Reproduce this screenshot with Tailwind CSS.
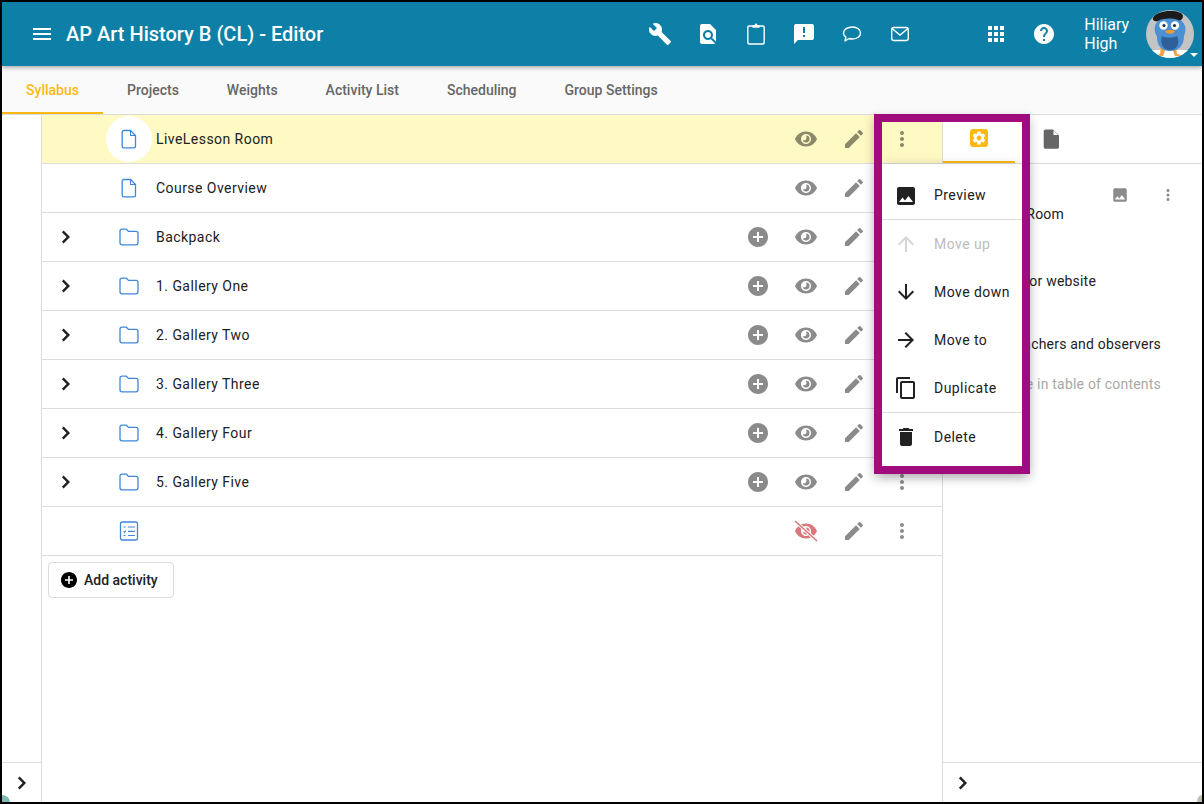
<!doctype html>
<html>
<head>
<meta charset="utf-8">
<script src="https://cdn.jsdelivr.net/npm/@tailwindcss/browser@4"></script>
</head>
<body class="m-0 w-[1204px] h-[804px] overflow-hidden bg-black font-['Roboto',sans-serif]">
<svg class="hidden" width="0" height="0">
  <defs>
    <symbol id="i-eye" viewBox="0 0 24 24"><path fill-rule="evenodd" d="M12 4.500C7 4.500 2.730 7.610 1 12c1.730 4.390 6 7.500 11 7.500s9.270-3.110 11-7.500c-1.730-4.390-6-7.500-11-7.500zM12 17c-2.760 0-5-2.240-5-5s2.240-5 5-5 5 2.240 5 5-2.240 5-5 5z"/><path d="M12 8.500a3.500 3.500 0 1 1-3.400 4.300c.9.700 2.400.700 3.200-.1.800-.8 1-2.600.2-4.200z"/></symbol>
    <symbol id="i-edit" viewBox="0 0 24 24"><path d="M3 17.250V21h3.750L17.810 9.940l-3.750-3.750L3 17.250zM20.710 7.040c.39-.39.39-1.020 0-1.410l-2.340-2.340c-.39-.39-1.020-.39-1.410 0l-1.830 1.830 3.750 3.750 1.830-1.830z"/></symbol>
    <symbol id="i-dots" viewBox="0 0 24 24"><path d="M12 8c1.100 0 2-.9 2-2s-.9-2-2-2-2 .9-2 2 .9 2 2 2zm0 2c-1.100 0-2 .9-2 2s.9 2 2 2 2-.9 2-2-.9-2-2-2zm0 6c-1.100 0-2 .9-2 2s.9 2 2 2 2-.9 2-2-.9-2-2-2z"/></symbol>
    <symbol id="i-add" viewBox="0 0 24 24"><path d="M12 2C6.480 2 2 6.480 2 12s4.480 10 10 10 10-4.480 10-10S17.520 2 12 2zm5 11h-4v4h-2v-4H7v-2h4V7h2v4h4v2z"/></symbol>
    <symbol id="i-chev" viewBox="0 0 24 24"><path d="M9.600 5.600 7.900 7.300 12.600 12l-4.700 4.700 1.700 1.700 6.400-6.400z"/></symbol>
    <symbol id="i-folder" viewBox="0 0 24 24"><path fill="none" stroke="#3f87d9" stroke-width="1.300" stroke-linejoin="round" d="M3 6.200C3 5 3.800 4.200 5 4.200h4.400l2 2.200H19c1.200 0 2 .8 2 2v9.400c0 1.200-.8 2-2 2H5c-1.200 0-2-.8-2-2z"/></symbol>
    <symbol id="i-doc" viewBox="0 0 24 24"><path fill="none" stroke="#3f87d9" stroke-width="1.300" stroke-linejoin="round" d="M6.800 3.500h6.700l5 5v10.700c0 .9-.7 1.600-1.600 1.600H6.800c-.9 0-1.600-.7-1.600-1.600V5.100c0-.9.7-1.600 1.600-1.600z"/><path fill="none" stroke="#3f87d9" stroke-width="1.100" stroke-linejoin="round" d="M13.500 3.500v5h5"/></symbol>
  </defs>
</svg>

<div class="relative m-[2px] w-[1200px] h-[800px] bg-white overflow-hidden flex flex-col">
  <!-- app bar -->
  <header class="relative z-10 h-[64px] shrink-0 bg-[#0e7fa6] text-white flex items-center shadow-[0_2px_4px_rgba(0,0,0,0.3)]">
    <svg class="ml-[28px] w-[24px] h-[24px] fill-white" viewBox="0 0 24 24"><path d="M3 18h18v-2H3v2zm0-5h18v-2H3v2zm0-7v2h18V6H3z"/></svg>
    <h1 class="ml-[12px] text-[20px] leading-none font-medium">AP Art History B (CL) - Editor</h1>
    <div class="ml-[325px] flex items-center gap-[24px]">
      <svg class="w-[24px] h-[24px] fill-white" viewBox="0 0 24 24"><path d="M22.700 19l-9.100-9.100c.9-2.300.4-5-1.500-6.900-2-2-5-2.400-7.400-1.300L9 6 6 9 1.600 4.700C.4 7.100.9 10.100 2.900 12.100c1.900 1.900 4.600 2.400 6.900 1.500l9.100 9.100c.4.4 1 .4 1.400 0l2.300-2.300c.5-.4.5-1.100.1-1.400z"/></svg>
      <svg class="w-[24px] h-[24px] fill-white" viewBox="0 0 24 24"><path d="M20 19.590V8l-6-6H6c-1.100 0-1.990.9-1.990 2L4 20c0 1.100.89 2 1.990 2H18c.45 0 .85-.15 1.190-.4l-4.430-4.430c-.8.520-1.740.83-2.760.83-2.760 0-5-2.240-5-5s2.240-5 5-5 5 2.240 5 5c0 1.020-.31 1.960-.83 2.750L20 19.590zM9 13c0 1.660 1.340 3 3 3s3-1.340 3-3-1.340-3-3-3-3 1.340-3 3z"/></svg>
      <svg class="w-[24px] h-[24px]" viewBox="0 0 24 24"><rect x="3.800" y="4" width="16.400" height="18" rx="1.500" fill="none" stroke="#fff" stroke-width="1.400"/><path fill="#fff" d="M8.500 3h2.200c.1-.9.600-1.500 1.300-1.500s1.200.6 1.300 1.500h2.200v2.800h-7z"/></svg>
      <svg class="w-[24px] h-[24px] fill-white" viewBox="0 0 24 24"><path d="M20 2H4c-1.100 0-1.990.9-1.990 2L2 22l4-4h14c1.100 0 2-.9 2-2V4c0-1.100-.9-2-2-2zm-7 9h-2V5h2v6zm0 4h-2v-2h2v2z"/></svg>
      <svg class="w-[24px] h-[24px]" viewBox="0 0 24 24"><path fill="none" stroke="#fff" stroke-width="1.400" stroke-linejoin="round" d="M12.500 5c4.700 0 8 2.500 8 6s-3.300 6-8 6c-1.200 0-2.400-.2-3.400-.5L5 19l.9-3.900C4.400 14 3.500 12.600 3.500 11c0-3.500 4-6 9-6z"/></svg>
      <svg class="w-[24px] h-[24px]" viewBox="0 0 24 24"><rect x="3.700" y="5.500" width="16.600" height="13" rx="2.200" fill="none" stroke="#fff" stroke-width="1.400"/><path fill="none" stroke="#fff" stroke-width="1.400" d="M4 6.500 12 13l8-6.500"/></svg>
    </div>
    <div class="ml-[72px] flex items-center gap-[24px]">
      <svg class="w-[24px] h-[24px] fill-white" viewBox="0 0 24 24"><path d="M4 8h4V4H4v4zm6 12h4v-4h-4v4zm-6 0h4v-4H4v4zm0-6h4v-4H4v4zm6 0h4v-4h-4v4zm6-10v4h4V4h-4zm-6 4h4V4h-4v4zm6 6h4v-4h-4v4zm0 6h4v-4h-4v4z"/></svg>
      <svg class="w-[24px] h-[24px] fill-white" viewBox="0 0 24 24"><path d="M12 2C6.480 2 2 6.480 2 12s4.480 10 10 10 10-4.480 10-10S17.520 2 12 2zm1 17h-2v-2h2v2zm2.070-7.750l-.9.920C13.450 12.900 13 13.500 13 15h-2v-.5c0-1.100.45-2.100 1.170-2.830l1.240-1.260c.37-.36.59-.86.59-1.410 0-1.100-.9-2-2-2s-2 .9-2 2H8c0-2.210 1.790-4 4-4s4 1.790 4 4c0 .88-.36 1.680-.93 2.250z"/></svg>
    </div>
    <div class="ml-[28px] w-[62px] text-[16px] leading-[19px]">Hiliary<br>High</div>
    <div class="relative w-[48px] h-[48px]">
      <svg class="w-[48px] h-[48px]" viewBox="0 0 48 48">
        <defs><clipPath id="av"><circle cx="24" cy="24" r="24"/></clipPath></defs>
        <g clip-path="url(#av)">
          <rect width="48" height="48" fill="#c4c4c4"/>
          <path d="M4 40h40v8H4z" fill="#fff"/>
          <path d="M15 36l-1 8-6 2h9l1-2 2-8zM30 36l1 8 7 2h-9l-1-2-2-8z" fill="#f0a24a"/>
          <path d="M9 16c2-6 8-9 15-9s13 3 15 9c1 4 0 7-1 10 0 9-5 15-14 15S11 35 11 27c-2-4-3-7-2-11z" fill="#4a90d2"/>
          <path d="M16 26c3 2 11 2 15 0 3 6 1 14-7 14s-10-8-8-14z" fill="#2f5f99"/>
          <path d="M7 8c2-5 10-7 17-7 8 0 13 2 13 5 0 3-2 5-5 4-6-2-14-2-20 1-3 1-6-1-5-3z" fill="#1b1b1b"/>
          <circle cx="17.500" cy="15.500" r="4.200" fill="#fff"/><circle cx="29" cy="15.500" r="4.200" fill="#fff"/>
          <circle cx="18" cy="15.500" r="1.600" fill="#17324f"/><circle cx="28.500" cy="15.500" r="1.600" fill="#17324f"/>
          <path d="M19 21c2-1.500 8-1.500 10 0-1 3.500-9 3.500-10 0z" fill="#f09a2e"/>
        </g>
      </svg>
      <span class="absolute right-[-4px] bottom-[1px] w-0 h-0 border-x-[4px] border-x-transparent border-t-[4px] border-t-white"></span>
    </div>
  </header>

  <!-- tabs -->
  <nav class="h-[49px] shrink-0 bg-[#fafafa] border-b border-[#dcdcdc] flex text-[14px] font-medium text-[#666666]">
    <a class="w-[101px] h-[48px] pt-[2px] flex items-center justify-center text-[#fdb913] border-b-2 border-[#fdb913]">Syllabus</a>
    <a class="h-[48px] px-[24px] flex items-center">Projects</a>
    <a class="h-[48px] px-[24px] flex items-center">Weights</a>
    <a class="h-[48px] px-[24px] flex items-center">Activity List</a>
    <a class="h-[48px] px-[24px] flex items-center">Scheduling</a>
    <a class="h-[48px] px-[24px] flex items-center">Group Settings</a>
  </nav>

  <!-- body -->
  <div class="flex-1 flex min-h-0">
    <!-- left rail -->
    <aside class="w-[40px] shrink-0 border-r border-[#dcdcdc] flex flex-col justify-end">
      <div class="h-[40px] border-t border-[#dcdcdc] flex items-center justify-center">
        <svg class="w-[24px] h-[24px] fill-[#212121]" viewBox="0 0 24 24"><use href="#i-chev"/></svg>
      </div>
    </aside>

    <!-- list -->
    <main class="w-[901px] shrink-0 border-r border-[#dcdcdc] text-[14px] tracking-[0.45px] text-[#212121]">
      <div class="h-[49px] bg-[#fff9c4] border-b border-[#dcdcdc] flex items-center pl-[48px] pr-[16px]">
        <span class="w-[46px] h-[46px] ml-[16px] mr-[4px] rounded-full bg-white flex items-center justify-center"><svg class="w-[24px] h-[24px]"><use href="#i-doc"/></svg></span>
        <span class="flex-1">LiveLesson Room</span>
        <span class="w-[48px] flex justify-center"><svg class="w-[24px] h-[24px] opacity-45"><use href="#i-eye"/></svg></span>
        <span class="w-[48px] flex justify-center"><svg class="w-[24px] h-[24px] opacity-45"><use href="#i-edit"/></svg></span>
        <span class="w-[48px] flex justify-center"><svg class="w-[24px] h-[24px] opacity-45"><use href="#i-dots"/></svg></span>
      </div>
      <div class="h-[49px] border-b border-[#dcdcdc] flex items-center pl-[48px] pr-[16px]">
        <span class="w-[46px] h-[46px] ml-[16px] mr-[4px] flex items-center justify-center"><svg class="w-[24px] h-[24px]"><use href="#i-doc"/></svg></span>
        <span class="flex-1">Course Overview</span>
        <span class="w-[48px] flex justify-center"><svg class="w-[24px] h-[24px] opacity-45"><use href="#i-eye"/></svg></span>
        <span class="w-[48px] flex justify-center"><svg class="w-[24px] h-[24px] opacity-45"><use href="#i-edit"/></svg></span>
        <span class="w-[48px] flex justify-center"><svg class="w-[24px] h-[24px] opacity-45"><use href="#i-dots"/></svg></span>
      </div>
      <div class="h-[49px] border-b border-[#dcdcdc] flex items-center pr-[16px]">
        <span class="w-[48px] flex justify-center"><svg class="w-[24px] h-[24px] fill-[#212121]"><use href="#i-chev"/></svg></span>
        <span class="w-[46px] h-[46px] ml-[16px] mr-[4px] flex items-center justify-center"><svg class="w-[24px] h-[24px]"><use href="#i-folder"/></svg></span>
        <span class="flex-1">Backpack</span>
        <span class="w-[48px] flex justify-center"><svg class="w-[24px] h-[24px] opacity-45"><use href="#i-add"/></svg></span>
        <span class="w-[48px] flex justify-center"><svg class="w-[24px] h-[24px] opacity-45"><use href="#i-eye"/></svg></span>
        <span class="w-[48px] flex justify-center"><svg class="w-[24px] h-[24px] opacity-45"><use href="#i-edit"/></svg></span>
        <span class="w-[48px] flex justify-center"><svg class="w-[24px] h-[24px] opacity-45"><use href="#i-dots"/></svg></span>
      </div>
      <div class="h-[49px] border-b border-[#dcdcdc] flex items-center pr-[16px]">
        <span class="w-[48px] flex justify-center"><svg class="w-[24px] h-[24px] fill-[#212121]"><use href="#i-chev"/></svg></span>
        <span class="w-[46px] h-[46px] ml-[16px] mr-[4px] flex items-center justify-center"><svg class="w-[24px] h-[24px]"><use href="#i-folder"/></svg></span>
        <span class="flex-1">1. Gallery One</span>
        <span class="w-[48px] flex justify-center"><svg class="w-[24px] h-[24px] opacity-45"><use href="#i-add"/></svg></span>
        <span class="w-[48px] flex justify-center"><svg class="w-[24px] h-[24px] opacity-45"><use href="#i-eye"/></svg></span>
        <span class="w-[48px] flex justify-center"><svg class="w-[24px] h-[24px] opacity-45"><use href="#i-edit"/></svg></span>
        <span class="w-[48px] flex justify-center"><svg class="w-[24px] h-[24px] opacity-45"><use href="#i-dots"/></svg></span>
      </div>
      <div class="h-[49px] border-b border-[#dcdcdc] flex items-center pr-[16px]">
        <span class="w-[48px] flex justify-center"><svg class="w-[24px] h-[24px] fill-[#212121]"><use href="#i-chev"/></svg></span>
        <span class="w-[46px] h-[46px] ml-[16px] mr-[4px] flex items-center justify-center"><svg class="w-[24px] h-[24px]"><use href="#i-folder"/></svg></span>
        <span class="flex-1">2. Gallery Two</span>
        <span class="w-[48px] flex justify-center"><svg class="w-[24px] h-[24px] opacity-45"><use href="#i-add"/></svg></span>
        <span class="w-[48px] flex justify-center"><svg class="w-[24px] h-[24px] opacity-45"><use href="#i-eye"/></svg></span>
        <span class="w-[48px] flex justify-center"><svg class="w-[24px] h-[24px] opacity-45"><use href="#i-edit"/></svg></span>
        <span class="w-[48px] flex justify-center"><svg class="w-[24px] h-[24px] opacity-45"><use href="#i-dots"/></svg></span>
      </div>
      <div class="h-[49px] border-b border-[#dcdcdc] flex items-center pr-[16px]">
        <span class="w-[48px] flex justify-center"><svg class="w-[24px] h-[24px] fill-[#212121]"><use href="#i-chev"/></svg></span>
        <span class="w-[46px] h-[46px] ml-[16px] mr-[4px] flex items-center justify-center"><svg class="w-[24px] h-[24px]"><use href="#i-folder"/></svg></span>
        <span class="flex-1">3. Gallery Three</span>
        <span class="w-[48px] flex justify-center"><svg class="w-[24px] h-[24px] opacity-45"><use href="#i-add"/></svg></span>
        <span class="w-[48px] flex justify-center"><svg class="w-[24px] h-[24px] opacity-45"><use href="#i-eye"/></svg></span>
        <span class="w-[48px] flex justify-center"><svg class="w-[24px] h-[24px] opacity-45"><use href="#i-edit"/></svg></span>
        <span class="w-[48px] flex justify-center"><svg class="w-[24px] h-[24px] opacity-45"><use href="#i-dots"/></svg></span>
      </div>
      <div class="h-[49px] border-b border-[#dcdcdc] flex items-center pr-[16px]">
        <span class="w-[48px] flex justify-center"><svg class="w-[24px] h-[24px] fill-[#212121]"><use href="#i-chev"/></svg></span>
        <span class="w-[46px] h-[46px] ml-[16px] mr-[4px] flex items-center justify-center"><svg class="w-[24px] h-[24px]"><use href="#i-folder"/></svg></span>
        <span class="flex-1">4. Gallery Four</span>
        <span class="w-[48px] flex justify-center"><svg class="w-[24px] h-[24px] opacity-45"><use href="#i-add"/></svg></span>
        <span class="w-[48px] flex justify-center"><svg class="w-[24px] h-[24px] opacity-45"><use href="#i-eye"/></svg></span>
        <span class="w-[48px] flex justify-center"><svg class="w-[24px] h-[24px] opacity-45"><use href="#i-edit"/></svg></span>
        <span class="w-[48px] flex justify-center"><svg class="w-[24px] h-[24px] opacity-45"><use href="#i-dots"/></svg></span>
      </div>
      <div class="h-[49px] border-b border-[#dcdcdc] flex items-center pr-[16px]">
        <span class="w-[48px] flex justify-center"><svg class="w-[24px] h-[24px] fill-[#212121]"><use href="#i-chev"/></svg></span>
        <span class="w-[46px] h-[46px] ml-[16px] mr-[4px] flex items-center justify-center"><svg class="w-[24px] h-[24px]"><use href="#i-folder"/></svg></span>
        <span class="flex-1">5. Gallery Five</span>
        <span class="w-[48px] flex justify-center"><svg class="w-[24px] h-[24px] opacity-45"><use href="#i-add"/></svg></span>
        <span class="w-[48px] flex justify-center"><svg class="w-[24px] h-[24px] opacity-45"><use href="#i-eye"/></svg></span>
        <span class="w-[48px] flex justify-center"><svg class="w-[24px] h-[24px] opacity-45"><use href="#i-edit"/></svg></span>
        <span class="w-[48px] flex justify-center"><svg class="w-[24px] h-[24px] opacity-45"><use href="#i-dots"/></svg></span>
      </div>
      <div class="h-[49px] border-b border-[#dcdcdc] flex items-center pl-[48px] pr-[16px]">
        <span class="w-[46px] h-[46px] ml-[16px] mr-[4px] flex items-center justify-center">
          <svg class="w-[24px] h-[24px]" viewBox="0 0 24 24"><rect x="3.500" y="3" width="17" height="18" rx="2" fill="none" stroke="#3f87d9" stroke-width="1.300"/><path fill="none" stroke="#3f87d9" stroke-width="1.200" d="M11 8h7M11 12.300h7M11 16.500h7M6.500 8h2M6.500 16.500h2M6.500 12.300l1 1 1.300-1.800"/></svg>
        </span>
        <span class="flex-1"></span>
        <span class="w-[48px] flex justify-center">
          <svg class="w-[24px] h-[24px]" viewBox="0 0 24 24"><g fill="#d9777a"><use href="#i-eye"/></g><path d="M1.500 2.500 22.500 21.500" stroke="#ffffff" stroke-width="3.200"/><path d="M1 2 23 22" stroke="#d9777a" stroke-width="1.600"/></svg>
        </span>
        <span class="w-[48px] flex justify-center"><svg class="w-[24px] h-[24px] opacity-45"><use href="#i-edit"/></svg></span>
        <span class="w-[48px] flex justify-center"><svg class="w-[24px] h-[24px] opacity-45"><use href="#i-dots"/></svg></span>
      </div>
      <div class="pt-[6px] pl-[6px]">
        <button class="h-[36px] w-[126px] border border-[#dcdcdc] rounded-[4px] flex items-center pl-[12px] gap-[7px] text-[14px] tracking-normal font-medium text-[#212121] bg-white">
          <svg class="w-[16px] h-[16px] fill-black" viewBox="2 2 20 20"><path d="M12 2C6.480 2 2 6.480 2 12s4.480 10 10 10 10-4.480 10-10S17.520 2 12 2zm5 11h-4v4h-2v-4H7v-2h4V7h2v4h4v2z"/></svg>
          Add activity
        </button>
      </div>
    </main>

    <!-- right panel -->
    <section class="flex-1 flex flex-col min-w-0 text-[14px] tracking-[0.2px] text-[#212121]">
      <div class="h-[49px] shrink-0 border-b border-[#dcdcdc] flex">
        <div class="w-[72px] h-[48px] flex items-center justify-center border-b-2 border-[#fdb913]">
          <span class="w-[18px] h-[18px] rounded-[3px] bg-[#fdb913] flex items-center justify-center">
            <svg class="w-[16px] h-[16px] fill-white" viewBox="0 0 24 24"><path d="M19.140 12.940c.04-.3.06-.61.06-.94 0-.32-.02-.64-.07-.94l2.030-1.580c.18-.14.23-.41.12-.61l-1.920-3.320c-.12-.22-.37-.29-.59-.22l-2.390.96c-.5-.38-1.030-.7-1.620-.94l-.36-2.540c-.04-.24-.24-.41-.48-.41h-3.840c-.24 0-.43.17-.47.41l-.36 2.540c-.59.24-1.130.57-1.620.94l-2.390-.96c-.22-.08-.47 0-.59.22L2.740 8.870c-.12.21-.08.47.12.61l2.030 1.580c-.05.3-.09.63-.09.94s.02.64.07.94l-2.030 1.580c-.18.14-.23.41-.12.61l1.920 3.320c.12.22.37.29.59.22l2.390-.96c.5.38 1.030.7 1.620.94l.36 2.540c.05.24.24.41.48.41h3.840c.24 0 .44-.17.47-.41l.36-2.540c.59-.24 1.130-.56 1.620-.94l2.390.96c.22.08.47 0 .59-.22l1.920-3.320c.12-.22.07-.47-.12-.61l-2.010-1.580zM12 15.600c-1.980 0-3.600-1.620-3.600-3.600s1.620-3.600 3.600-3.600 3.600 1.620 3.600 3.600-1.620 3.600-3.600 3.600z"/></svg>
          </span>
        </div>
        <div class="w-[72px] h-[48px] flex items-center justify-center">
          <svg class="w-[24px] h-[24px] fill-[#666666]" viewBox="0 0 24 24"><path d="M6.500 2.500H14l6 6v11.500c0 1-.8 1.800-1.800 1.800H6.500c-1 0-1.800-.8-1.800-1.800V4.300c0-1 .8-1.800 1.800-1.800z"/><path d="M14.500 3.500v4.500H19z" fill="#ffffff"/></svg>
        </div>
      </div>
      <div class="flex-1 min-h-0">
        <div class="h-[48px] flex items-center justify-end pr-[25px] gap-[30px] mt-[7px]">
          <svg class="w-[18px] h-[18px] opacity-45" viewBox="0 0 24 24"><path d="M21 19V5c0-1.100-.9-2-2-2H5c-1.100 0-2 .9-2 2v14c0 1.100.9 2 2 2h14c1.100 0 2-.9 2-2zM8.500 13.500l2.500 3.010L14.500 12l4.500 6H5l3.500-4.500z"/></svg>
          <svg class="w-[18px] h-[18px] opacity-45" viewBox="0 0 24 24"><use href="#i-dots"/></svg>
        </div>
        <p class="text-right pr-[138px] -mt-[15px] leading-[20px]">Room</p>
        <p class="text-right pr-[106px] mt-[47px] leading-[20px]">or website</p>
        <p class="text-right pr-[41px] mt-[43px] leading-[20px]">achers and observers</p>
        <p class="text-right pr-[41px] mt-[20px] leading-[20px] text-[#a8a8a8]">e in table of contents</p>
      </div>
      <div class="h-[40px] shrink-0 border-t border-[#dcdcdc] flex items-center pl-[8px]">
        <svg class="w-[24px] h-[24px] fill-[#212121]" viewBox="0 0 24 24"><use href="#i-chev"/></svg>
      </div>
    </section>
  </div>

  <!-- popup menu -->
  <div class="absolute z-20 left-[880px] top-[162px] w-[140px] h-[302px] bg-white shadow-[0_4px_14px_rgba(0,0,0,0.25)] pt-[8px] text-[14px] tracking-[0.45px] text-[#212121]">
    <div class="h-[48px] flex items-center pl-[12px] gap-[16px] border-b border-[#dcdcdc]">
      <svg class="w-[24px] h-[24px] fill-[#212121]" viewBox="0 0 24 24"><path d="M21 19V5c0-1.100-.9-2-2-2H5c-1.100 0-2 .9-2 2v14c0 1.100.9 2 2 2h14c1.100 0 2-.9 2-2zM8.500 13.500l2.500 3.010L14.500 12l4.500 6H5l3.500-4.500z"/></svg>
      <span>Preview</span>
    </div>
    <div class="h-[48px] flex items-center pl-[12px] gap-[16px] text-[#bdbdbd]">
      <svg class="w-[24px] h-[24px] fill-[#d6d6d6]" viewBox="0 0 24 24"><path d="M4 12l1.410 1.410L11 7.830V20h2V7.830l5.580 5.590L20 12l-8-8-8 8z"/></svg>
      <span>Move up</span>
    </div>
    <div class="h-[48px] flex items-center pl-[12px] gap-[16px]">
      <svg class="w-[24px] h-[24px] fill-[#212121]" viewBox="0 0 24 24"><path d="M20 12l-1.410-1.410L13 16.170V4h-2v12.170l-5.580-5.590L4 12l8 8 8-8z"/></svg>
      <span>Move down</span>
    </div>
    <div class="h-[48px] flex items-center pl-[12px] gap-[16px]">
      <svg class="w-[24px] h-[24px] fill-[#212121]" viewBox="0 0 24 24"><path d="M12 4l-1.410 1.410L16.170 11H4v2h12.170l-5.580 5.590L12 20l8-8z"/></svg>
      <span>Move to</span>
    </div>
    <div class="h-[49px] flex items-center pl-[12px] gap-[16px] border-b border-[#dcdcdc]">
      <svg class="w-[24px] h-[24px] fill-[#212121]" viewBox="0 0 24 24"><path d="M16 1H4c-1.100 0-2 .9-2 2v14h2V3h12V1zm3 4H8c-1.100 0-2 .9-2 2v14c0 1.100.9 2 2 2h11c1.100 0 2-.9 2-2V7c0-1.100-.9-2-2-2zm0 16H8V7h11v14z"/></svg>
      <span>Duplicate</span>
    </div>
    <div class="h-[48px] flex items-center pl-[12px] gap-[16px]">
      <svg class="w-[24px] h-[24px] fill-[#212121]" viewBox="0 0 24 24"><path d="M6 19c0 1.100.9 2 2 2h8c1.100 0 2-.9 2-2V7H6v12zM19 4h-3.500l-1-1h-5l-1 1H5v2h14V4z"/></svg>
      <span>Delete</span>
    </div>
  </div>
  <!-- annotation frame -->
  <div class="absolute z-30 left-[872px] top-[112px] w-[156px] h-[360px] border-[8px] border-[#a00c7d] shadow-[0_4px_10px_rgba(0,0,0,0.25)] pointer-events-none"></div>
  <!-- window corners -->
  <span class="absolute left-0 bottom-0 w-[8px] h-[7px] bg-[#7fb9b6] rounded-tr-[100%]"></span>
  <span class="absolute right-0 bottom-0 w-[5px] h-[7px] bg-[#b8c4ae] rounded-tl-[100%]"></span>
</div>
</body>
</html>
